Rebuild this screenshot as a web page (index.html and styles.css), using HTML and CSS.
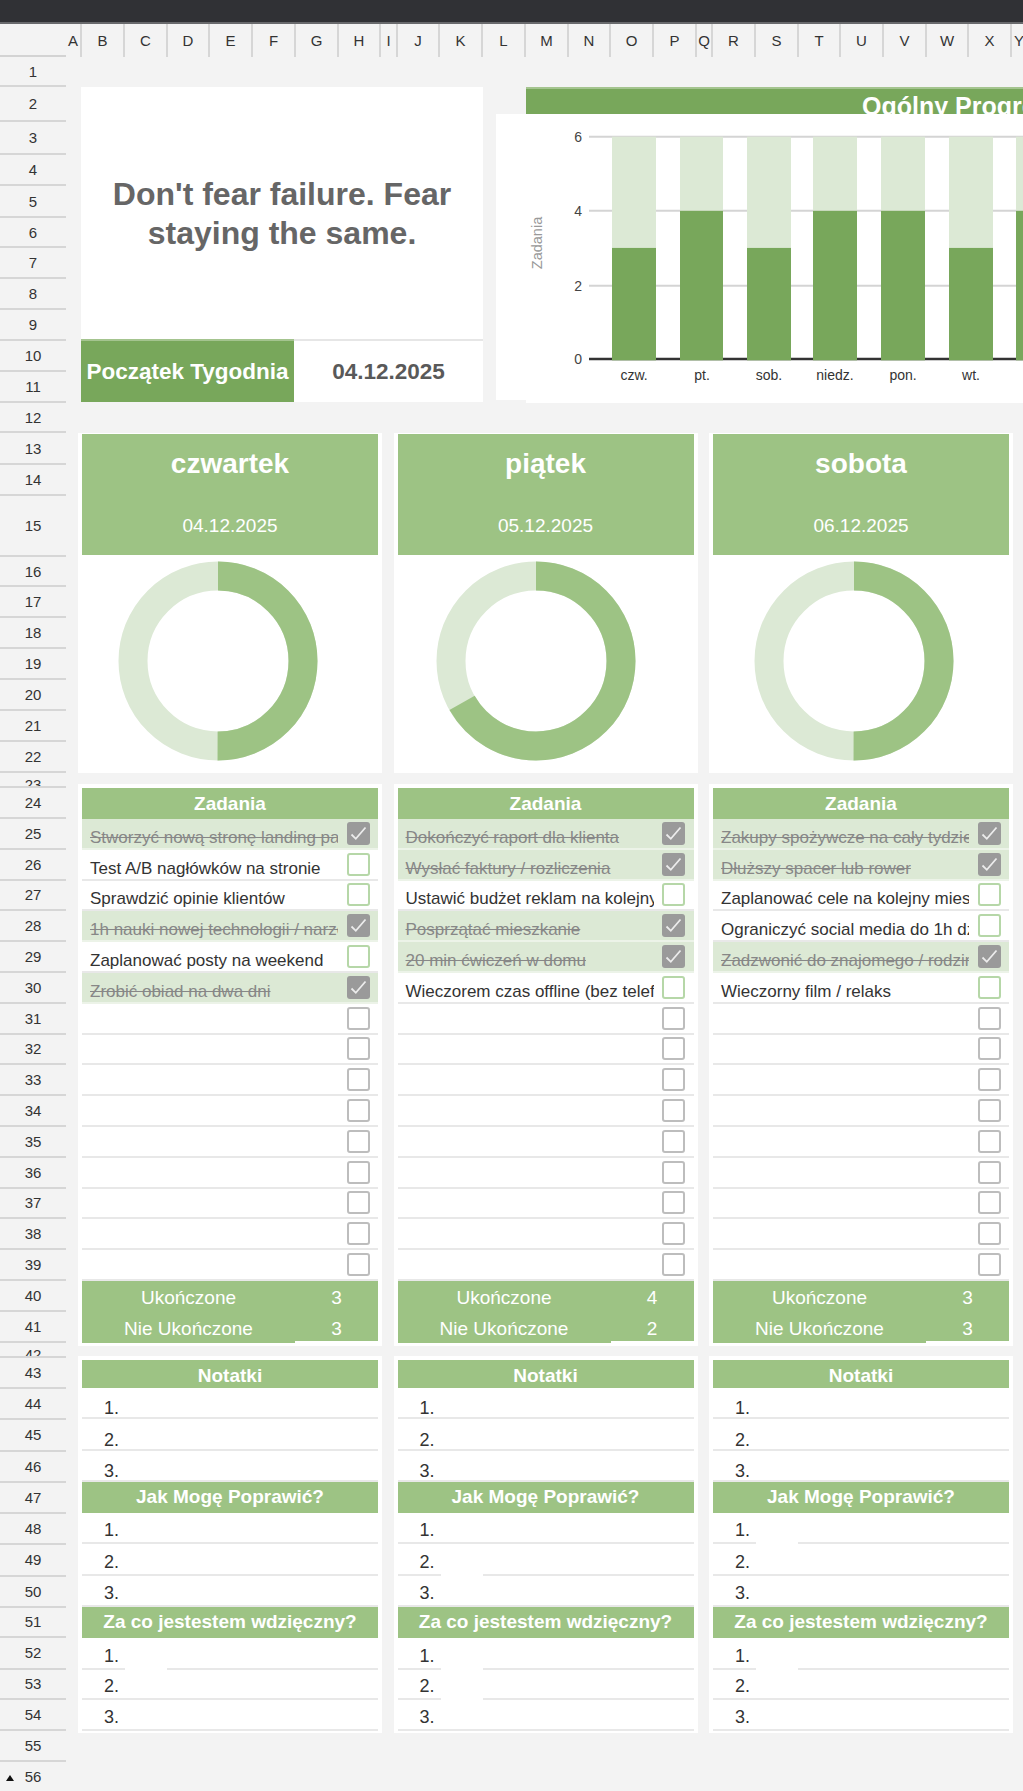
FILE: index.html
```html
<!DOCTYPE html>
<html lang="pl">
<head>
<meta charset="utf-8">
<title>Planer tygodniowy</title>
<link rel="stylesheet" href="styles.css">
</head>
<body>
<div class="topbar"></div>
<div class="colhead">
  <div class="corner"></div>
  <div class="ch w16">A</div><div class="ch w43">B</div><div class="ch w43">C</div><div class="ch w42">D</div><div class="ch w43">E</div><div class="ch w43">F</div><div class="ch w43">G</div><div class="ch w42">H</div><div class="ch w17">I</div><div class="ch w42">J</div><div class="ch w43">K</div><div class="ch w43">L</div><div class="ch w43">M</div><div class="ch w42">N</div><div class="ch w43">O</div><div class="ch w43">P</div><div class="ch w16">Q</div><div class="ch w43">R</div><div class="ch w43">S</div><div class="ch w42">T</div><div class="ch w43">U</div><div class="ch w43">V</div><div class="ch w42">W</div><div class="ch w43">X</div><div class="ch w16">Y</div><div class="ch w43">Z</div>
</div>
<div class="frame">
  <div class="rowhead">
    <div class="rn h30">1</div><div class="rn h35">2</div><div class="rn h33">3</div><div class="rn h31">4</div><div class="rn h32">5</div><div class="rn h30">6</div><div class="rn h31">7</div><div class="rn h31">8</div><div class="rn h31">9</div><div class="rn h31">10</div><div class="rn h31">11</div><div class="rn h30">12</div><div class="rn h32">13</div><div class="rn h31">14</div><div class="rn h61">15</div><div class="rn h30">16</div><div class="rn h31">17</div><div class="rn h31">18</div><div class="rn h31">19</div><div class="rn h31">20</div><div class="rn h31">21</div><div class="rn h31">22</div><div class="rn h15 short">23</div><div class="rn h31">24</div>
    <div class="rn h308">25</div><div class="rn h308">26</div><div class="rn h308">27</div><div class="rn h308">28</div><div class="rn h308">29</div><div class="rn h308">30</div><div class="rn h308">31</div><div class="rn h308">32</div><div class="rn h308">33</div><div class="rn h308">34</div><div class="rn h308">35</div><div class="rn h308">36</div><div class="rn h308">37</div><div class="rn h308">38</div><div class="rn h308">39</div>
    <div class="rn h31">40</div><div class="rn h31">41</div><div class="rn h15 short">42</div><div class="rn h31">43</div><div class="rn h31">44</div><div class="rn h32">45</div><div class="rn h31">46</div><div class="rn h31">47</div><div class="rn h31">48</div><div class="rn h32">49</div><div class="rn h31">50</div><div class="rn h30">51</div><div class="rn h32">52</div><div class="rn h30">53</div><div class="rn h31">54</div><div class="rn h31">55</div><div class="rn h31"><span class="tri"></span>56</div>
  </div>

  <div class="sheet">
    <section class="top">
      <div class="quote-card">
        <div class="quote">Don't fear failure. Fear staying the same.</div>
        <div class="week">
          <div class="week-label">Początek Tygodnia</div>
          <div class="week-date">04.12.2025</div>
        </div>
      </div>
      <div class="progress">
        <div class="progress-head">Ogólny Progres</div>
        <div class="progress-body"></div>
        <div class="chart">
          <svg width="560" height="286" viewBox="0 0 560 286" font-family="Liberation Sans, Arial, sans-serif">
            <g stroke="#d4d4d4" stroke-width="2">
              <line x1="93" y1="22.7" x2="560" y2="22.7"/>
              <line x1="93" y1="96.7" x2="560" y2="96.7"/>
              <line x1="93" y1="171.7" x2="560" y2="171.7"/>
            </g>
            <line x1="93" y1="245" x2="560" y2="245" stroke="#333" stroke-width="2.5"/>
            <g fill="#dce9d5">
              <rect x="116" y="22.7" width="44" height="111.2"/>
              <rect x="184" y="22.7" width="43" height="74.1"/>
              <rect x="251" y="22.7" width="44" height="111.2"/>
              <rect x="317" y="22.7" width="44" height="74.1"/>
              <rect x="385" y="22.7" width="44" height="74.1"/>
              <rect x="453" y="22.7" width="44" height="111.2"/>
              <rect x="520" y="22.7" width="44" height="74.1"/>
            </g>
            <g fill="#78a75b">
              <rect x="116" y="133.9" width="44" height="112.4"/>
              <rect x="184" y="96.8" width="43" height="149.5"/>
              <rect x="251" y="133.9" width="44" height="112.4"/>
              <rect x="317" y="96.8" width="44" height="149.5"/>
              <rect x="385" y="96.8" width="44" height="149.5"/>
              <rect x="453" y="133.9" width="44" height="112.4"/>
              <rect x="520" y="96.8" width="44" height="149.5"/>
            </g>
            <g font-size="14" fill="#444" text-anchor="end">
              <text x="86" y="27.7">6</text>
              <text x="86" y="101.7">4</text>
              <text x="86" y="176.7">2</text>
              <text x="86" y="250">0</text>
            </g>
            <g font-size="14" fill="#333" text-anchor="middle">
              <text x="138" y="266">czw.</text>
              <text x="206" y="266">pt.</text>
              <text x="273" y="266">sob.</text>
              <text x="339" y="266">niedz.</text>
              <text x="407" y="266">pon.</text>
              <text x="475" y="266">wt.</text>
              <text x="542" y="266">śr.</text>
            </g>
            <text transform="translate(46 129) rotate(-90)" text-anchor="middle" font-size="14.5" fill="#999">Zadania</text>
          </svg>
        </div>
      </div>
    </section>

    <section class="cols days">
      <div class="day">
        <div class="day-head"><div class="day-name">czwartek</div><div class="day-date">04.12.2025</div></div>
        <div class="donut d1">
          <svg width="200" height="200" viewBox="0 0 200 200"><circle cx="100" cy="100" r="85" fill="none" stroke="#dce9d5" stroke-width="29"/><circle cx="100" cy="100" r="85" fill="none" stroke="#9dc384" stroke-width="29" stroke-dasharray="267.04 534.07" transform="rotate(-90 100 100)"/></svg>
        </div>
      </div>
      <div class="day">
        <div class="day-head"><div class="day-name">piątek</div><div class="day-date">05.12.2025</div></div>
        <div class="donut d2">
          <svg width="200" height="200" viewBox="0 0 200 200"><circle cx="100" cy="100" r="85" fill="none" stroke="#dce9d5" stroke-width="29"/><circle cx="100" cy="100" r="85" fill="none" stroke="#9dc384" stroke-width="29" stroke-dasharray="356.05 534.07" transform="rotate(-90 100 100)"/></svg>
        </div>
      </div>
      <div class="day">
        <div class="day-head"><div class="day-name">sobota</div><div class="day-date">06.12.2025</div></div>
        <div class="donut d3">
          <svg width="200" height="200" viewBox="0 0 200 200"><circle cx="100" cy="100" r="85" fill="none" stroke="#dce9d5" stroke-width="29"/><circle cx="100" cy="100" r="85" fill="none" stroke="#9dc384" stroke-width="29" stroke-dasharray="267.04 534.07" transform="rotate(-90 100 100)"/></svg>
        </div>
      </div>
    </section>

    <section class="cols tasks">
      <div class="card">
        <div class="head">Zadania</div>
        <div class="task done"><div class="task-text">Stworzyć nową stronę landing page</div><div class="box-cell"><div class="box checked"><svg width="23" height="23" viewBox="0 0 23 23"><path d="M4.5 12.5 L8.8 16.8 L18.5 5.5" fill="none" stroke="#ececec" stroke-width="1.8"/></svg></div></div></div>
        <div class="task"><div class="task-text">Test A/B nagłówków na stronie</div><div class="box-cell"><div class="box todo"></div></div></div>
        <div class="task"><div class="task-text">Sprawdzić opinie klientów</div><div class="box-cell"><div class="box todo"></div></div></div>
        <div class="task done"><div class="task-text">1h nauki nowej technologii / narzędzia</div><div class="box-cell"><div class="box checked"><svg width="23" height="23" viewBox="0 0 23 23"><path d="M4.5 12.5 L8.8 16.8 L18.5 5.5" fill="none" stroke="#ececec" stroke-width="1.8"/></svg></div></div></div>
        <div class="task"><div class="task-text">Zaplanować posty na weekend</div><div class="box-cell"><div class="box todo"></div></div></div>
        <div class="task done"><div class="task-text">Zrobić obiad na dwa dni</div><div class="box-cell"><div class="box checked"><svg width="23" height="23" viewBox="0 0 23 23"><path d="M4.5 12.5 L8.8 16.8 L18.5 5.5" fill="none" stroke="#ececec" stroke-width="1.8"/></svg></div></div></div>
        <div class="task"><div class="task-text"></div><div class="box-cell"><div class="box"></div></div></div>
        <div class="task"><div class="task-text"></div><div class="box-cell"><div class="box"></div></div></div>
        <div class="task"><div class="task-text"></div><div class="box-cell"><div class="box"></div></div></div>
        <div class="task"><div class="task-text"></div><div class="box-cell"><div class="box"></div></div></div>
        <div class="task"><div class="task-text"></div><div class="box-cell"><div class="box"></div></div></div>
        <div class="task"><div class="task-text"></div><div class="box-cell"><div class="box"></div></div></div>
        <div class="task"><div class="task-text"></div><div class="box-cell"><div class="box"></div></div></div>
        <div class="task"><div class="task-text"></div><div class="box-cell"><div class="box"></div></div></div>
        <div class="task"><div class="task-text"></div><div class="box-cell"><div class="box"></div></div></div>
        <div class="summary">
          <div class="sum-row"><div class="sum-label">Ukończone</div><div class="sum-val">3</div></div>
          <div class="sum-row"><div class="sum-label">Nie Ukończone</div><div class="sum-val">3</div></div>
        </div>
      </div>

      <div class="card">
        <div class="head">Zadania</div>
        <div class="task done"><div class="task-text">Dokończyć raport dla klienta</div><div class="box-cell"><div class="box checked"><svg width="23" height="23" viewBox="0 0 23 23"><path d="M4.5 12.5 L8.8 16.8 L18.5 5.5" fill="none" stroke="#ececec" stroke-width="1.8"/></svg></div></div></div>
        <div class="task done"><div class="task-text">Wysłać faktury / rozliczenia</div><div class="box-cell"><div class="box checked"><svg width="23" height="23" viewBox="0 0 23 23"><path d="M4.5 12.5 L8.8 16.8 L18.5 5.5" fill="none" stroke="#ececec" stroke-width="1.8"/></svg></div></div></div>
        <div class="task"><div class="task-text">Ustawić budżet reklam na kolejny tydzień</div><div class="box-cell"><div class="box todo"></div></div></div>
        <div class="task done"><div class="task-text">Posprzątać mieszkanie</div><div class="box-cell"><div class="box checked"><svg width="23" height="23" viewBox="0 0 23 23"><path d="M4.5 12.5 L8.8 16.8 L18.5 5.5" fill="none" stroke="#ececec" stroke-width="1.8"/></svg></div></div></div>
        <div class="task done"><div class="task-text">20 min ćwiczeń w domu</div><div class="box-cell"><div class="box checked"><svg width="23" height="23" viewBox="0 0 23 23"><path d="M4.5 12.5 L8.8 16.8 L18.5 5.5" fill="none" stroke="#ececec" stroke-width="1.8"/></svg></div></div></div>
        <div class="task"><div class="task-text">Wieczorem czas offline (bez telefonu)</div><div class="box-cell"><div class="box todo"></div></div></div>
        <div class="task"><div class="task-text"></div><div class="box-cell"><div class="box"></div></div></div>
        <div class="task"><div class="task-text"></div><div class="box-cell"><div class="box"></div></div></div>
        <div class="task"><div class="task-text"></div><div class="box-cell"><div class="box"></div></div></div>
        <div class="task"><div class="task-text"></div><div class="box-cell"><div class="box"></div></div></div>
        <div class="task"><div class="task-text"></div><div class="box-cell"><div class="box"></div></div></div>
        <div class="task"><div class="task-text"></div><div class="box-cell"><div class="box"></div></div></div>
        <div class="task"><div class="task-text"></div><div class="box-cell"><div class="box"></div></div></div>
        <div class="task"><div class="task-text"></div><div class="box-cell"><div class="box"></div></div></div>
        <div class="task"><div class="task-text"></div><div class="box-cell"><div class="box"></div></div></div>
        <div class="summary">
          <div class="sum-row"><div class="sum-label">Ukończone</div><div class="sum-val">4</div></div>
          <div class="sum-row"><div class="sum-label">Nie Ukończone</div><div class="sum-val">2</div></div>
        </div>
      </div>

      <div class="card">
        <div class="head">Zadania</div>
        <div class="task done"><div class="task-text">Zakupy spożywcze na cały tydzień</div><div class="box-cell"><div class="box checked"><svg width="23" height="23" viewBox="0 0 23 23"><path d="M4.5 12.5 L8.8 16.8 L18.5 5.5" fill="none" stroke="#ececec" stroke-width="1.8"/></svg></div></div></div>
        <div class="task done"><div class="task-text">Dłuższy spacer lub rower</div><div class="box-cell"><div class="box checked"><svg width="23" height="23" viewBox="0 0 23 23"><path d="M4.5 12.5 L8.8 16.8 L18.5 5.5" fill="none" stroke="#ececec" stroke-width="1.8"/></svg></div></div></div>
        <div class="task"><div class="task-text">Zaplanować cele na kolejny miesiąc</div><div class="box-cell"><div class="box todo"></div></div></div>
        <div class="task"><div class="task-text">Ograniczyć social media do 1h dziennie</div><div class="box-cell"><div class="box todo"></div></div></div>
        <div class="task done"><div class="task-text">Zadzwonić do znajomego / rodziny</div><div class="box-cell"><div class="box checked"><svg width="23" height="23" viewBox="0 0 23 23"><path d="M4.5 12.5 L8.8 16.8 L18.5 5.5" fill="none" stroke="#ececec" stroke-width="1.8"/></svg></div></div></div>
        <div class="task"><div class="task-text">Wieczorny film / relaks</div><div class="box-cell"><div class="box todo"></div></div></div>
        <div class="task"><div class="task-text"></div><div class="box-cell"><div class="box"></div></div></div>
        <div class="task"><div class="task-text"></div><div class="box-cell"><div class="box"></div></div></div>
        <div class="task"><div class="task-text"></div><div class="box-cell"><div class="box"></div></div></div>
        <div class="task"><div class="task-text"></div><div class="box-cell"><div class="box"></div></div></div>
        <div class="task"><div class="task-text"></div><div class="box-cell"><div class="box"></div></div></div>
        <div class="task"><div class="task-text"></div><div class="box-cell"><div class="box"></div></div></div>
        <div class="task"><div class="task-text"></div><div class="box-cell"><div class="box"></div></div></div>
        <div class="task"><div class="task-text"></div><div class="box-cell"><div class="box"></div></div></div>
        <div class="task"><div class="task-text"></div><div class="box-cell"><div class="box"></div></div></div>
        <div class="summary">
          <div class="sum-row"><div class="sum-label">Ukończone</div><div class="sum-val">3</div></div>
          <div class="sum-row"><div class="sum-label">Nie Ukończone</div><div class="sum-val">3</div></div>
        </div>
      </div>
    </section>

    <section class="cols notes">
      <div class="card nc">
        <div class="head h28">Notatki</div>
        <div class="note low">1.</div><div class="note n32 low">2.</div><div class="note low">3.</div>
        <div class="head">Jak Mogę Poprawić?</div>
        <div class="note">1.</div><div class="note n32">2.</div><div class="note">3.</div>
        <div class="head">Za co jestestem wdzięczny?</div>
        <div class="note n32 gap">1.</div><div class="note n30">2.</div><div class="note">3.</div>
      </div>
      <div class="card nc">
        <div class="head h28">Notatki</div>
        <div class="note low">1.</div><div class="note n32 low">2.</div><div class="note low">3.</div>
        <div class="head">Jak Mogę Poprawić?</div>
        <div class="note">1.</div><div class="note n32 gap">2.</div><div class="note">3.</div>
        <div class="head">Za co jestestem wdzięczny?</div>
        <div class="note n32 gap">1.</div><div class="note n30 gap">2.</div><div class="note">3.</div>
      </div>
      <div class="card nc">
        <div class="head h28">Notatki</div>
        <div class="note low">1.</div><div class="note n32 low">2.</div><div class="note low">3.</div>
        <div class="head">Jak Mogę Poprawić?</div>
        <div class="note gap">1.</div><div class="note n32">2.</div><div class="note">3.</div>
        <div class="head">Za co jestestem wdzięczny?</div>
        <div class="note n32 gap">1.</div><div class="note n30">2.</div><div class="note">3.</div>
      </div>
    </section>
  </div>
</div>
</body>
</html>
```

FILE: styles.css
```css
* { box-sizing: border-box; }

html, body {
  margin: 0;
  padding: 0;
}

body {
  width: 1023px;
  height: 1791px;
  overflow: hidden;
  background: #f3f3f3;
  font-family: "Liberation Sans", Arial, sans-serif;
  color: #333;
}

/* window chrome */
.topbar {
  height: 24px;
  background: #303135;
  border-bottom: 2px solid #68696c;
}

/* column header */
.colhead {
  display: flex;
  height: 33px;
  overflow: hidden;
}
.corner {
  width: 66px;
  flex: none;
  border-bottom: 2px solid #d3d3d3;
}
.ch {
  flex: none;
  border-right: 2px solid #d6d6d6;
  font-size: 15px;
  display: flex;
  align-items: center;
  justify-content: center;
  color: #333;
  overflow: hidden;
  white-space: nowrap;
}
.w16 { width: 16px; }
.w17 { width: 17px; }
.w42 { width: 42px; }
.w43 { width: 43px; }

/* body frame */
.frame { display: flex; }

.rowhead {
  width: 66px;
  flex: none;
}
.rn {
  position: relative;
  display: flex;
  align-items: center;
  justify-content: center;
  border-bottom: 2px solid #d6d6d6;
  font-size: 15px;
  color: #333;
  overflow: hidden;
}
.rn.short {
  align-items: flex-start;
  padding-top: 3px;
  line-height: 17px;
}
.h15 { height: 15px; }
.h30 { height: 30px; }
.h31 { height: 31px; }
.h32 { height: 32px; }
.h33 { height: 33px; }
.h35 { height: 35px; }
.h61 { height: 61px; }
.h308 { height: 30.8px; }

.tri {
  position: absolute;
  left: 6px;
  top: 13px;
  width: 0;
  height: 0;
  border-left: 4.5px solid transparent;
  border-right: 4.5px solid transparent;
  border-bottom: 6px solid #111;
}

.sheet {
  flex: 1;
  min-width: 0;
  overflow: hidden;
}

/* top section */
.top {
  display: flex;
  margin-top: 30px;
  height: 316px;
}
.quote-card {
  flex: none;
  margin-left: 15px;
  width: 402px;
  height: 315px;
  background: #fff;
  display: flex;
  flex-direction: column;
}
.quote {
  flex: 1;
  display: flex;
  align-items: center;
  justify-content: center;
  text-align: center;
  padding: 2px 24px 0;
  font-weight: bold;
  font-size: 32px;
  line-height: 39px;
  color: #666;
}
.week {
  display: flex;
  height: 63px;
}
.week-label {
  width: 213px;
  background: #78a75b;
  border-top: 2px solid #a4c48f;
  color: #fff;
  font-weight: bold;
  font-size: 22.5px;
  display: flex;
  align-items: center;
  justify-content: center;
  white-space: nowrap;
}
.week-date {
  flex: 1;
  border-top: 2px solid #e6e6e6;
  color: #595959;
  font-weight: bold;
  font-size: 22.5px;
  display: flex;
  align-items: center;
  justify-content: center;
}

.progress {
  flex: 1;
  margin-left: 43px;
  position: relative;
}
.progress-head {
  height: 35px;
  background: #78a75b;
  border-top: 2px solid #a4c48f;
  color: #fff;
  font-weight: bold;
  font-size: 25px;
  line-height: 30px;
  padding: 2px 0 0 336px;
  white-space: nowrap;
  overflow: hidden;
}
.progress-body {
  height: 281px;
  background: #fff;
}
.chart {
  position: absolute;
  left: -30px;
  top: 27px;
  width: 560px;
  height: 286px;
  background: #fff;
}
.chart svg { display: block; }

/* three column grid */
.cols {
  display: grid;
  grid-template-columns: repeat(3, 304px);
  column-gap: 11.5px;
  margin-left: 12px;
}

/* day cards */
.days { margin-top: 30px; }
.day {
  background: #fff;
  height: 340px;
  padding: 1px 4px 0;
}
.day-head {
  height: 121px;
  background: #9dc384;
  color: #fff;
  text-align: center;
  padding-top: 14px;
}
.day-name {
  font-weight: bold;
  font-size: 28px;
  line-height: 32px;
}
.day-date {
  font-size: 19px;
  line-height: 22px;
  margin-top: 35px;
}
.donut {
  display: flex;
  justify-content: center;
  padding: 6px 20px 0 0;
}
.donut.d1 { padding-right: 24px; }
.donut.d3 { padding-right: 15px; }
.donut svg { display: block; }

/* tasks */
.tasks { margin-top: 11px; }
.card {
  background: #fff;
  padding: 4px 4px 3px;
}
.head {
  height: 31px;
  background: #9dc384;
  color: #fff;
  font-weight: bold;
  font-size: 19px;
  line-height: 22px;
  display: flex;
  align-items: center;
  justify-content: center;
  white-space: nowrap;
}
.head.h28 {
  height: 28px;
  padding-top: 5px;
}
.task {
  display: flex;
  height: 30.8px;
  border-bottom: 2px solid #e8e8e8;
}
.task.done {
  background: #dce9d5;
  border-bottom-color: rgba(255, 255, 255, 0.45);
}
.task-text {
  flex: 1;
  min-width: 0;
  align-self: flex-end;
  overflow: hidden;
  white-space: nowrap;
  padding: 0 0 1px 8px;
  font-size: 17px;
  line-height: 19px;
  color: #333;
}
.done .task-text {
  color: #878787;
  text-decoration: line-through;
}
.box-cell {
  width: 40px;
  flex: none;
  display: flex;
  align-items: center;
  justify-content: center;
}
.box {
  width: 23px;
  height: 23px;
  border: 2px solid #bdbdbd;
  border-radius: 3px;
  background: #fff;
}
.box.todo { border-color: #b6d7a8; }
.box.checked {
  border: none;
  background: #9a9a9a;
}
.box svg { display: block; }

.summary {
  background: #9dc384;
  color: #fff;
  font-size: 19px;
  line-height: 22px;
}
.sum-row {
  display: flex;
  height: 31px;
}
.sum-label {
  width: 213px;
  align-self: flex-end;
  text-align: center;
  padding-bottom: 3px;
}
.sum-val {
  flex: 1;
  display: flex;
  align-items: flex-end;
  justify-content: center;
  padding-bottom: 3px;
}
.sum-row + .sum-row .sum-val {
  border-bottom: 2px solid #fff;
  padding-bottom: 1px;
}

/* notes */
.notes { margin-top: 10px; }
.card.nc { padding: 4px 4px 2px; }
.note {
  height: 31px;
  display: flex;
  align-items: flex-end;
  padding: 0 0 1px 22px;
  border-bottom: 2px solid #e8e8e8;
  font-size: 18px;
  line-height: 21px;
  color: #333;
}
.note.low {
  padding-bottom: 0;
  line-height: 17px;
}
.note.n32 { height: 32px; }
.note.n30 { height: 30px; }
.note.gap {
  border-bottom-color: transparent;
  background: linear-gradient(90deg, #e8e8e8 43px, transparent 43px, transparent 85px, #e8e8e8 85px) left bottom / 100% 2px no-repeat border-box;
}
```
